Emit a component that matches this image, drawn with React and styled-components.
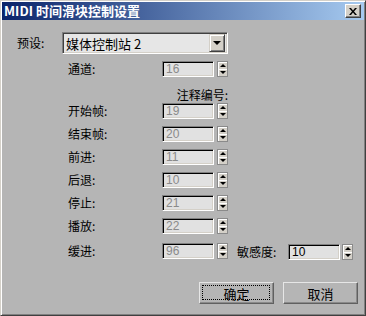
import React from 'react'
import styled, { createGlobalStyle } from 'styled-components'

const GlobalStyle = createGlobalStyle`
  html, body {
    margin: 0;
    padding: 0;
    background: #b5b5b5;
  }
  body {
    font-family: "Noto Sans CJK SC", "Liberation Sans", sans-serif;
    font-size: 12px;
    color: #000;
  }
`

const Window = styled.div`
  width: 366px;
  height: 316px;
  box-sizing: border-box;
  display: flex;
  flex-direction: column;
  background: #b5b5b5;
  border-top: 1px solid #d4d0c8;
  border-left: 1px solid #d4d0c8;
  border-right: 1px solid #404040;
  border-bottom: 1px solid #404040;
  box-shadow: inset 1px 1px 0 #ffffff, inset -1px -1px 0 #808080;
  padding: 1px;
`

const TitleBar = styled.div`
  height: 18px;
  display: flex;
  align-items: center;
  justify-content: space-between;
  padding: 0 3px 0 2px;
  background: linear-gradient(to right, #0a246a, #a6caf0);
`

const Title = styled.span`
  color: #fff;
  font-weight: bold;
  font-size: 13px;
  line-height: 18px;
`

const CloseButton = styled.div`
  width: 16px;
  height: 14px;
  box-sizing: border-box;
  background: #d4d0c8;
  border-top: 1px solid #fff;
  border-left: 1px solid #fff;
  border-right: 1px solid #404040;
  border-bottom: 1px solid #404040;
  box-shadow: inset -1px -1px 0 #808080;
  display: flex;
  align-items: center;
  justify-content: center;
`

const Body = styled.div`
  flex: 1;
  display: flex;
  flex-direction: column;
  padding: 12px 0 0 15px;
`

const PresetRow = styled.div`
  display: flex;
  align-items: center;
  height: 22px;
`

const Label = styled.span`
  width: ${p => p.$w || 'auto'};
  line-height: 16px;
  white-space: nowrap;
`

const Combo = styled.div`
  width: 166px;
  height: 22px;
  box-sizing: border-box;
  display: flex;
  align-items: center;
  justify-content: space-between;
  background: #e6e6e6;
  border-top: 1px solid #808080;
  border-left: 1px solid #808080;
  border-right: 1px solid #ffffff;
  border-bottom: 1px solid #ffffff;
  box-shadow: inset 1px 1px 0 #404040, inset -1px -1px 0 #d4d0c8;
  padding: 2px 2px 2px 3px;
  font-size: 13px;
`

const ComboButton = styled.div`
  width: 16px;
  height: 18px;
  box-sizing: border-box;
  background: #d4d0c8;
  border-top: 1px solid #d4d0c8;
  border-left: 1px solid #d4d0c8;
  border-right: 1px solid #404040;
  border-bottom: 1px solid #404040;
  box-shadow: inset 1px 1px 0 #fff, inset -1px -1px 0 #808080;
  display: flex;
  align-items: center;
  justify-content: center;
`

const Arrow = styled.span`
  width: 0;
  height: 0;
  border-left: ${p => p.$size}px solid transparent;
  border-right: ${p => p.$size}px solid transparent;
  ${p => (p.$up ? 'border-bottom' : 'border-top')}: ${p => p.$size}px solid #000;
`

const Fields = styled.div`
  display: flex;
  flex-direction: column;
  gap: 7px;
  margin: 7px 0 0 51px;
`

const FieldRow = styled.div`
  display: grid;
  grid-template-columns: 94px 52px 14px ${p => (p.$extra ? 'auto' : '')};
  align-items: center;
  height: 16px;
`

const NoteRow = styled.div`
  width: 160px;
  text-align: right;
  line-height: 16px;
  margin: 3px 0 -7px 0;
`

const Input = styled.div`
  width: 52px;
  height: 16px;
  box-sizing: border-box;
  background: #e1e1e1;
  border-top: 1px solid #808080;
  border-left: 1px solid #808080;
  border-right: 1px solid #ffffff;
  border-bottom: 1px solid #ffffff;
  box-shadow: inset 1px 1px 0 #000, inset -1px -1px 0 #d4d0c8;
  padding: 0 0 0 3px;
  font-family: "Liberation Sans", sans-serif;
  font-size: 12px;
  line-height: 14px;
  color: ${p => (p.$disabled ? '#8a8a8a' : '#000')};
`

const Spinner = styled.div`
  width: 11px;
  height: 16px;
  margin-left: ${p => p.$gap ?? 3}px;
  display: flex;
  flex-direction: column;
  box-sizing: border-box;
  border: 1px solid #8a8a8a;
  background: #d4d0c8;
`

const SpinHalf = styled.div`
  flex: 1;
  display: flex;
  align-items: center;
  justify-content: center;
  box-shadow: inset 1px 1px 0 #fff;
`

const Sensitivity = styled.div`
  display: flex;
  align-items: center;
  margin-left: 9px;
  margin-top: 3px;
`

const Buttons = styled.div`
  display: flex;
  justify-content: flex-end;
  gap: 9px;
  margin-top: 25px;
  padding-right: 6px;
`

const Button = styled.div`
  width: 75px;
  height: 22px;
  box-sizing: border-box;
  display: flex;
  align-items: center;
  justify-content: center;
  background: #b5b5b5;
  border-top: 1px solid #e6e6e6;
  border-left: 1px solid #e6e6e6;
  border-right: 1px solid #606060;
  border-bottom: 1px solid #606060;
  box-shadow: inset -1px -1px 0 #8a8a8a;
  font-size: 13px;
  position: relative;
  ${p => p.$focused && `
    &::after {
      content: '';
      position: absolute;
      inset: 2px 3px 3px 2px;
      border: 1px dotted #000;
    }
  `}
`

const Spin = ({ gap }) => (
  <Spinner $gap={gap}>
    <SpinHalf><Arrow $up $size={3} /></SpinHalf>
    <SpinHalf><Arrow $size={3} /></SpinHalf>
  </Spinner>
)

const rows = [
  ['开始帧:', '19'],
  ['结束帧:', '20'],
  ['前进:', '11'],
  ['后退:', '10'],
  ['停止:', '21'],
  ['播放:', '22'],
]

export default function App() {
  return (
    <>
      <GlobalStyle />
      <Window>
        <TitleBar>
          <Title>MIDI 时间滑块控制设置</Title>
          <CloseButton>
            <svg width="8" height="7" viewBox="0 0 8 7">
              <path d="M0 0h2l2 2.5L6 0h2L5 3.5 8 7H6L4 4.5 2 7H0l3-3.5z" fill="#000" />
            </svg>
          </CloseButton>
        </TitleBar>
        <Body>
          <PresetRow>
            <Label $w="45px">预设:</Label>
            <Combo>
              <span>媒体控制站 2</span>
              <ComboButton><Arrow $size={4} /></ComboButton>
            </Combo>
          </PresetRow>
          <Fields>
            <FieldRow>
              <Label>通道:</Label>
              <Input $disabled>16</Input>
              <Spin />
            </FieldRow>
            <NoteRow>注释编号:</NoteRow>
            {rows.map(([label, value]) => (
              <FieldRow key={label}>
                <Label>{label}</Label>
                <Input $disabled>{value}</Input>
                <Spin />
              </FieldRow>
            ))}
            <FieldRow $extra>
              <Label>缓进:</Label>
              <Input $disabled>96</Input>
              <Spin />
              <Sensitivity>
                <Label $w="51px">敏感度:</Label>
                <Input>10</Input>
                <Spin gap={2} />
              </Sensitivity>
            </FieldRow>
          </Fields>
          <Buttons>
            <Button $focused>确定</Button>
            <Button>取消</Button>
          </Buttons>
        </Body>
      </Window>
    </>
  )
}
